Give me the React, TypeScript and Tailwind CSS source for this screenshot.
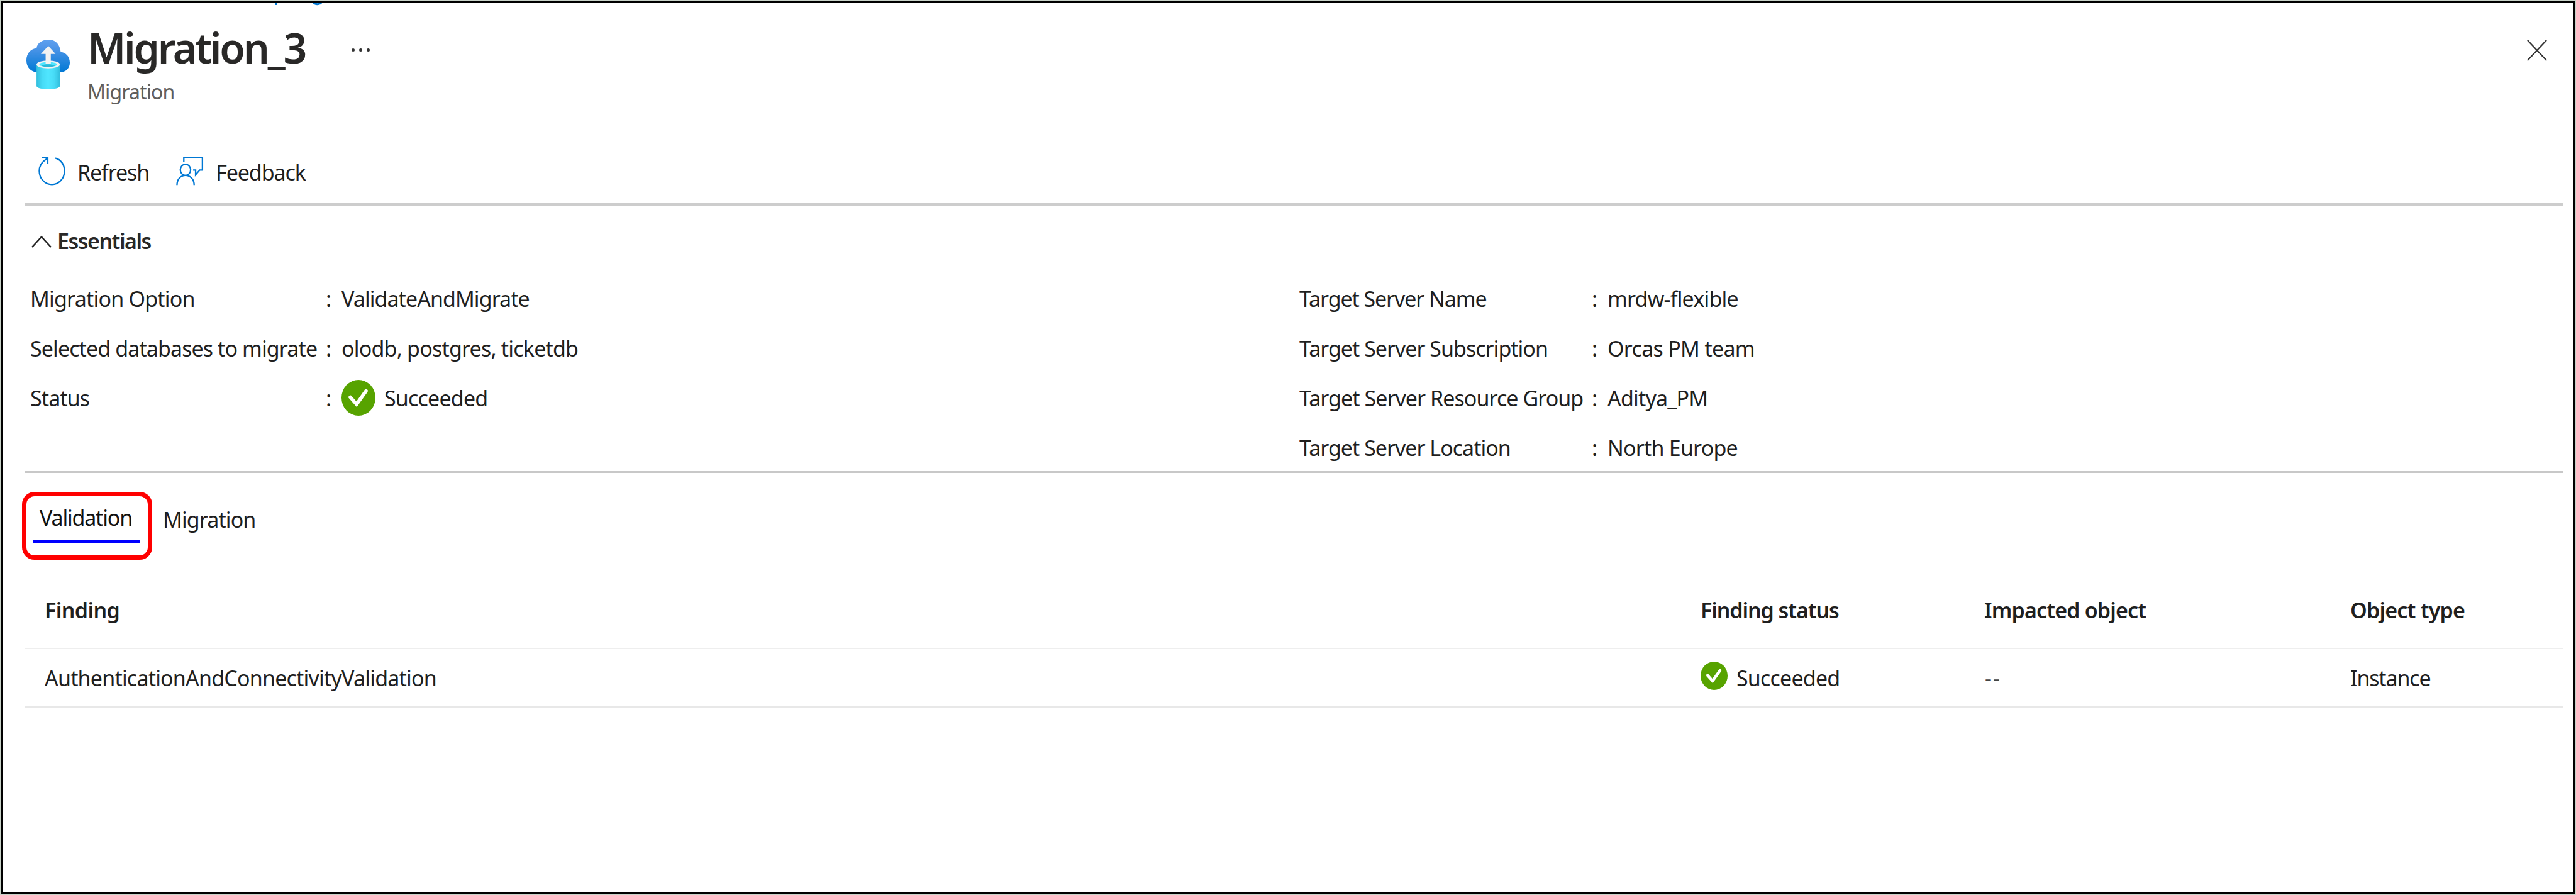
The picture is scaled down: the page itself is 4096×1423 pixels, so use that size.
import type { ReactNode } from 'react';

function MigrationIcon() {
  return (
    <svg viewBox="66 68 216 246" className="h-[81px] w-[71px] shrink-0">
      <defs>
        <linearGradient id="cloud" x1="0" y1="0" x2="0" y2="1">
          <stop offset="0" stopColor="#5ea0ef" />
          <stop offset="0.2" stopColor="#5397e9" />
          <stop offset="1" stopColor="#0078d4" />
        </linearGradient>
        <linearGradient id="cyl" x1="0" y1="0" x2="1" y2="0">
          <stop offset="0" stopColor="#32bedd" />
          <stop offset="0.25" stopColor="#47dbf6" />
          <stop offset="0.5" stopColor="#50e6ff" />
          <stop offset="0.75" stopColor="#47dbf6" />
          <stop offset="1" stopColor="#32bedd" />
        </linearGradient>
      </defs>
      <path
        d="M126 229C90 229 69 203 69 171C69 139 90 114 118 113C121 88 144 71 177 71C208 71 231 92 235 131C261 133 279 154 279 182C279 209 260 229 230 229Z"
        fill="url(#cloud)"
      />
      <path d="M118 191V295C118 304 143 311 174 311C206 311 231 304 231 295V191Z" fill="url(#cyl)" />
      <ellipse cx="174.5" cy="191" rx="56.5" ry="19" fill="#f2f2f2" />
      <ellipse cx="174.5" cy="191" rx="43" ry="12" fill="#50e6ff" />
      <path d="M142 197C150 191 162 190 174 190S199 191 207 197C199 202 187 203 174 203S150 202 142 197Z" fill="#2bb8d8" />
      <path d="M175 101L210 140H187V187H162V140H139Z" fill="#f2f2f2" />
    </svg>
  );
}

function RefreshIcon() {
  return (
    <svg viewBox="62 62 136 146" className="h-[48px] w-[45px]" fill="none" stroke="#0078d4" strokeWidth="7">
      <path d="M147 72C174 80 191 104 191 134C191 171 164 200 130 200S69 171 69 134C69 109 82 89 108 74" />
      <path d="M81 70H110V100" />
    </svg>
  );
}

function FeedbackIcon() {
  return (
    <svg viewBox="730 62 136 146" className="h-[48px] w-[45px]" fill="none" stroke="#0078d4" strokeWidth="7">
      <path d="M770 92V70H860V130H847L827 153V130H815" />
      <ellipse cx="778" cy="129" rx="25" ry="27" />
      <path d="M737 203C737 174 755 156 778 156S820 174 820 203" />
    </svg>
  );
}

function CheckIcon({ className }: { className: string }) {
  return (
    <svg viewBox="95 71 162 172" preserveAspectRatio="none" className={className}>
      <ellipse cx="176" cy="157" rx="81" ry="86" fill="#57a300" />
      <path d="M137 154L167 188L212 124" fill="none" stroke="#fff" strokeWidth="17" strokeLinejoin="miter" strokeLinecap="round" />
    </svg>
  );
}

function CloseIcon() {
  return (
    <svg viewBox="0 0 32 34" className="h-[34px] w-[32px]" fill="none" stroke="#333" strokeWidth="2.2" strokeLinecap="round">
      <path d="M1.5 1.5L30.5 32.5M30.5 1.5L1.5 32.5" />
    </svg>
  );
}

type Field = { label: string; labelClass: string; value: ReactNode };

const leftFields: Field[] = [
  { label: 'Migration Option', labelClass: 'tracking-[-0.8px]', value: <span className="tracking-[-0.95px]">ValidateAndMigrate</span> },
  { label: 'Selected databases to migrate', labelClass: 'tracking-[-0.9px]', value: <span className="tracking-[-0.8px]">olodb, postgres, ticketdb</span> },
  {
    label: 'Status',
    labelClass: 'tracking-[-0.9px]',
    value: (
      <>
        <CheckIcon className="mr-[14px] h-[57px] w-[54px]" />
        <span className="tracking-[-0.8px]">Succeeded</span>
      </>
    ),
  },
];

const rightFields: Field[] = [
  { label: 'Target Server Name', labelClass: 'tracking-[-1.1px]', value: <span className="tracking-[-0.8px]">mrdw-flexible</span> },
  { label: 'Target Server Subscription', labelClass: 'tracking-[-1px]', value: <span className="tracking-[-0.7px]">Orcas PM team</span> },
  { label: 'Target Server Resource Group', labelClass: 'tracking-[-0.95px]', value: <span className="tracking-[-0.8px]">Aditya_PM</span> },
  { label: 'Target Server Location', labelClass: 'tracking-[-1px]', value: <span className="tracking-[-0.8px]">North Europe</span> },
];

function FieldList({ fields, labelWidth }: { fields: Field[]; labelWidth: string }) {
  return (
    <dl className="flex flex-col">
      {fields.map((f) => (
        <div key={f.label} className="flex h-[79px] items-center">
          <dt className={`${labelWidth} ${f.labelClass}`}>{f.label}</dt>
          <span className="w-[25px]">:</span>
          <dd className="flex items-center">{f.value}</dd>
        </div>
      ))}
    </dl>
  );
}

const columns = 'grid grid-cols-[2633px_451px_582px_1fr] items-center pl-[31px]';

export default function App() {
  return (
    <div className="h-[1423px] w-[4096px] border border-[#c9d3c9] bg-white">
      <div className="relative flex h-full flex-col border-[3px] border-black pl-[36px] pr-[16px] font-['Noto_Sans','Open_Sans',sans-serif] text-[34px] leading-[40px] whitespace-nowrap text-[#1f1f1f]">
        {/* Descenders of the breadcrumb scrolled off above the blade */}
        <svg viewBox="0 0 90 5" className="absolute top-0 left-[430px] h-[5px] w-[90px]" fill="none" stroke="#0078d4" strokeWidth="3">
          <path d="M4.5 0V4M64 0C67 3.5 74 3.5 77 0" />
        </svg>

        <header className="flex h-[162px] justify-between pt-[31px]">
          <div className="flex">
            <div className="pt-[27px] pl-[1px]">
              <MigrationIcon />
            </div>
            <div className="ml-[27px] flex flex-col">
              <div className="flex items-center">
                <h1 className="w-[420px] text-[66px] leading-[80px] font-semibold tracking-[-3.2px] text-[#292827]">Migration_3</h1>
                <div className="mt-[8px] flex gap-[7px]">
                  <i className="size-[5px] rounded-full bg-[#333]" />
                  <i className="size-[5px] rounded-full bg-[#333]" />
                  <i className="size-[5px] rounded-full bg-[#333]" />
                </div>
              </div>
              <p className="mt-[11px] text-[32px] tracking-[-0.9px] text-[#605e5c]">Migration</p>
            </div>
          </div>
          <button className="mt-[28px] mr-[26px] self-start">
            <CloseIcon />
          </button>
        </header>

        <div className="mt-[59px] flex h-[102px] items-center border-b-[5px] border-[#cdcdcd] pl-[20px]">
          <button className="flex items-center">
            <span className="-mt-[4px]"><RefreshIcon /></span>
            <span className="ml-[18px] tracking-[-1.1px]">Refresh</span>
          </button>
          <button className="ml-[42px] flex items-center">
            <span className="-mt-[4px]"><FeedbackIcon /></span>
            <span className="ml-[19px] tracking-[-1.1px]">Feedback</span>
          </button>
        </div>

        <div className="mt-[36px] flex h-[40px] items-center pl-[10px]">
          <svg viewBox="0 0 32 20" className="mt-[2px] h-[20px] w-[32px]" fill="none" stroke="#222" strokeWidth="2.4">
            <path d="M1 19L16 2.5L31 19" />
          </svg>
          <h2 className="ml-[9px] font-semibold tracking-[-1.5px] text-[#292827]">Essentials</h2>
        </div>

        <section className="mt-[32px] grid h-[317px] grid-cols-[2018px_1fr] border-b-[3px] border-[#c8c8c8] pl-[8px]">
          <FieldList fields={leftFields} labelWidth="w-[470px]" />
          <FieldList fields={rightFields} labelWidth="w-[465px]" />
        </section>

        <nav className="mt-[30px] -ml-[5px] flex">
          <div className="flex h-[108px] w-[207px] flex-col rounded-[20px] border-[7px] border-[#ff0000] pt-[14px]">
            <span className="ml-[21px] tracking-[-1.2px] text-[#111]">Validation</span>
            <span className="mt-[15px] ml-[11px] h-[6px] w-[170px] bg-[#0000ff]" />
          </div>
          <span className="mt-[24px] ml-[17px] tracking-[-0.9px]">Migration</span>
        </nav>

        <div className={`${columns} mt-[20px] h-[122px] border-b-2 border-[#eeeeee] font-semibold`}>
          <span className="tracking-[-0.6px]">Finding</span>
          <span className="tracking-[-1.1px]">Finding status</span>
          <span className="tracking-[-0.85px]">Impacted object</span>
          <span className="tracking-[-0.8px]">Object type</span>
        </div>
        <div className={`${columns} h-[93px] border-b-2 border-[#e8e8e8]`}>
          <span className="tracking-[-0.8px]">AuthenticationAndConnectivityValidation</span>
          <span className="flex items-center">
            <CheckIcon className="mr-[14px] mb-[6px] h-[45px] w-[43px]" />
            <span className="tracking-[-0.8px]">Succeeded</span>
          </span>
          <span className="pl-[1px] tracking-[2px] text-[#444]">--</span>
          <span className="tracking-[-1.15px]">Instance</span>
        </div>
      </div>
    </div>
  );
}
